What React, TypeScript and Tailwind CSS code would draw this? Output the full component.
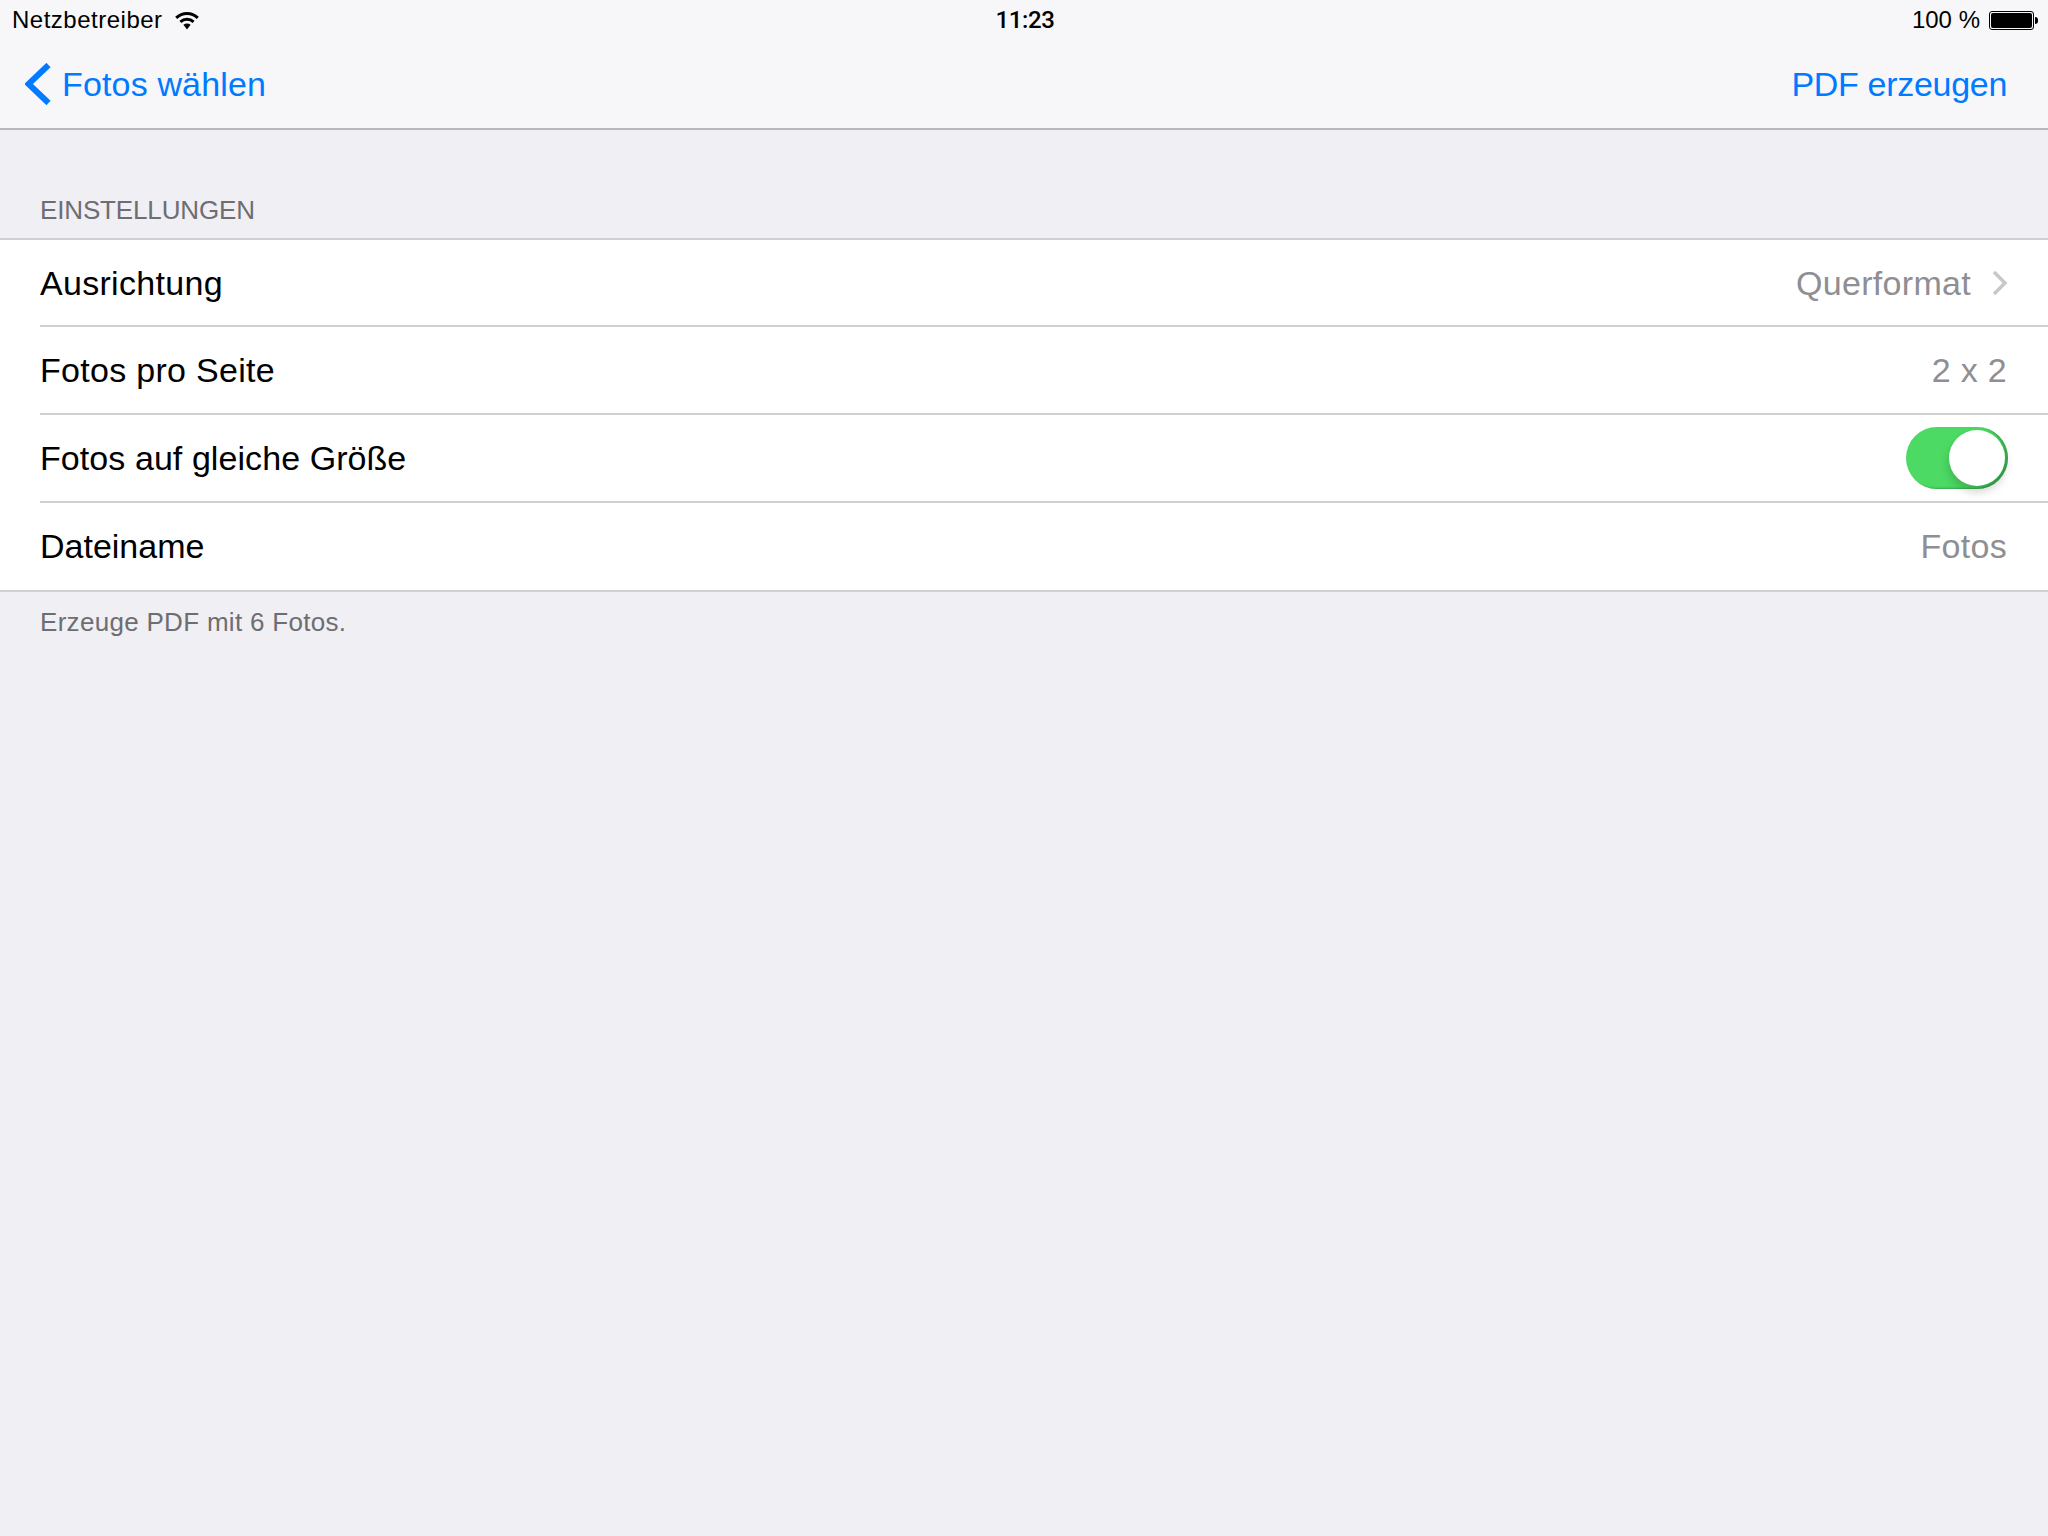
const font = "font-['Liberation_Sans',Arial,sans-serif]";

const WifiIcon = () => (
  <svg width="24" height="19" viewBox="0 0 24 19" fill="none" className="ml-[12px]">
    <path d="M1.2 6.8C7.4 1 16.6 1 22.8 6.8" stroke="#000" strokeWidth="3" />
    <path d="M5.4 10.8C9.2 7.4 14.8 7.4 18.6 10.8" stroke="#000" strokeWidth="3" />
    <path d="M8.4 13.8L12 18.5L15.6 13.8C13.4 12 10.6 12 8.4 13.8Z" fill="#000" />
  </svg>
);

const BatteryIcon = () => (
  <div className="ml-[9px] flex items-center">
    <div className="h-[19px] w-[45px] rounded-[3px] border border-black p-[1px]">
      <div className="h-full w-full rounded-[2px] bg-black" />
    </div>
    <div className="ml-[1px] h-[7px] w-[3px] rounded-r-full bg-black" />
  </div>
);

const Row = ({ label, children, className, labelClass }: { label: string; children?: React.ReactNode; className: string; labelClass: string }) => (
  <div className="pl-10">
    <div className={`flex items-center justify-between pr-[41px] ${className}`}>
      <span className={`text-[34px] leading-none text-black ${labelClass}`}>{label}</span>
      {children}
    </div>
  </div>
);

const Value = ({ children }: { children: React.ReactNode }) => (
  <span className="text-[34px] leading-none tracking-[0.3px] text-[#8e8e93]">{children}</span>
);

export default function App() {
  return (
    <div className={`flex min-h-[1536px] w-[2048px] flex-col bg-[#efeff4] ${font}`}>
      <header className="h-[130px] border-b-2 border-[#b8b8bc] bg-[#f7f7f9]">
        <div className="grid h-[40px] grid-cols-3 items-center pl-3 pr-[10px] text-[24px] leading-none text-black">
          <div className="flex items-center tracking-[0.5px]">
            Netzbetreiber
            <WifiIcon />
          </div>
          <div className="text-center font-['Roboto',sans-serif] font-medium tracking-[-0.4px]">11:23</div>
          <div className="flex items-center justify-end">
            100 %
            <BatteryIcon />
          </div>
        </div>
        <div className="flex h-[87px] items-center justify-between pr-[41px] pl-[25px] text-[34px] leading-none text-[#007aff]">
          <div className="flex items-center">
            <svg width="26" height="42" viewBox="0 0 26 42" fill="none">
              <path d="M23.5 2L3.5 21L23.5 40" stroke="#007aff" strokeWidth="6" />
            </svg>
            <span className="ml-[11px] tracking-[0.15px]">Fotos wählen</span>
          </div>
          <span className="tracking-[-0.3px]">PDF erzeugen</span>
        </div>
      </header>

      <div className="px-10 pt-[65px] pb-[13px] text-[26px] leading-[30px] tracking-[-0.15px] text-[#6d6d72]">EINSTELLUNGEN</div>

      <section className="border-y-2 border-[#d0d0d4] bg-white">
        <Row label="Ausrichtung" labelClass="tracking-[0.3px]" className="h-[87px] border-b-2 border-[#d0d0d4]">
          <div className="flex items-center">
            <Value>Querformat</Value>
            <svg width="16" height="26" viewBox="0 0 16 26" fill="none" className="ml-[21px] mr-[-1px]">
              <path d="M2 2L13 13L2 24" stroke="#c7c7cc" strokeWidth="3.5" />
            </svg>
          </div>
        </Row>
        <Row label="Fotos pro Seite" labelClass="tracking-[0.3px]" className="h-[88px] border-b-2 border-[#d0d0d4]">
          <Value>2 x 2</Value>
        </Row>
        <Row label="Fotos auf gleiche Größe" labelClass="tracking-[0.07px]" className="h-[88px] border-b-2 border-[#d0d0d4]">
          <div className="relative mr-[-1px] h-[62px] w-[102px] rounded-full bg-[#4cd964] shadow-[inset_-3px_-1px_2px_rgba(40,130,60,0.55)]">
            <div className="absolute top-[3px] right-[3px] h-[56px] w-[56px] rounded-full bg-white shadow-[0_6px_10px_rgba(0,0,0,0.18)]" />
          </div>
        </Row>
        <Row label="Dateiname" labelClass="tracking-normal" className="h-[87px] pb-[1px]">
          <Value>Fotos</Value>
        </Row>
      </section>

      <div className="px-10 pt-[15px] text-[26px] leading-[30px] tracking-[0.3px] text-[#6d6d72]">Erzeuge PDF mit 6 Fotos.</div>
    </div>
  );
}
